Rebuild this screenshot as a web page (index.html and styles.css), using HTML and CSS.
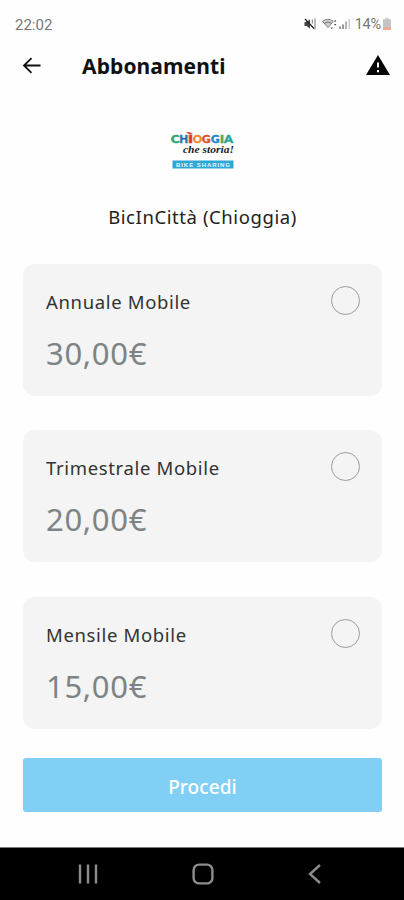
FILE: index.html
```
<!DOCTYPE html>
<html lang="it">
	<head>
		<meta charset="utf-8">
		<title>Abbonamenti</title>
		<link rel="stylesheet" href="styles.css">
	</head>
	<body>
		<div class="statusbar">
			<span class="clock">22:02</span>
			<div class="status-icons">
				<svg width="12" height="12" viewBox="0 0 12 12">
					<path d="M0.5 4h2.2L6 1.2v9.6L2.7 8H0.5z" fill="#444"/>
					<path d="M1 1l9 9.5" stroke="#222" stroke-width="1.3"/>
					<path d="M8.3 1.5v4M11 0.5v11" stroke="#777" stroke-width="1"/>
				</svg>
				<svg class="wifi" width="15" height="12" viewBox="0 0 15 12">
					<path d="M0.6 3.3Q6 -0.8 11.4 3.3L6 9.7z" fill="#ccc" stroke="#888" stroke-width="1"/>
					<path d="M2.5 5.3Q6 2.8 9.5 5.3" fill="none" stroke="#777"/>
					<path d="M8.5 9.5l1.2 1.5 1.3-1.5zM12 3.5l1.2-1.7 1.2 1.7zM12 6l1.2 1.7L14.4 6z" fill="#444"/>
				</svg>
				<svg width="12" height="12" viewBox="0 0 12 12">
					<path d="M1 8.5V11M4 6.5V11" stroke="#777" stroke-width="1.5"/>
					<path d="M7 3.5V11" stroke="#999" stroke-width="1.5"/>
					<path d="M10.3 1V11" stroke="#ccc" stroke-width="1.5"/>
				</svg>
				<span class="percent">14%</span>
				<svg width="8" height="12" viewBox="0 0 8 12">
					<path d="M2.5 0h3v1.2H8V12H0V1.2h2.5z" fill="#c4c4c4"/>
					<path d="M0 9.5h8V12H0z" fill="#f5a58f"/>
				</svg>
			</div>
		</div>
		<header>
			<svg width="20" height="18" viewBox="0 0 20 18">
				<path d="M9.5 1.2L2 8.500l7.500 7.300M2 8.500H18.500" fill="none" stroke="#111" stroke-width="1.8"/>
			</svg>
			<h1>Abbonamenti</h1>
			<svg class="warning" width="24" height="20" viewBox="0 0 24 20">
				<path d="M12 0L24 20H0z" fill="#050505"/>
				<path d="M11 7.5h2v5h-2zM11 15h2v2.2h-2z" fill="#fff"/>
			</svg>
		</header>
		<main>
			<svg class="logo" width="66" height="42" viewBox="0 0 66 42">
				<g class="logo-name">
					<text x="1" y="12.5" textLength="8.5" lengthAdjust="spacingAndGlyphs" fill="#2ba56a" stroke="#2ba56a">C</text>
					<text x="9.5" y="12.5" textLength="8.5" lengthAdjust="spacingAndGlyphs" fill="#2f6db0" stroke="#2f6db0">H</text>
					<text x="18" y="12.5" textLength="5" lengthAdjust="spacingAndGlyphs" fill="#e3342c" stroke="#e3342c">Ì</text>
					<text x="23" y="12.5" textLength="9" lengthAdjust="spacingAndGlyphs" fill="#ee8a26" stroke="#ee8a26">O</text>
					<text x="32" y="12.5" textLength="8.5" lengthAdjust="spacingAndGlyphs" fill="#e04f2e" stroke="#e04f2e">G</text>
					<text x="41" y="12.5" textLength="8.5" lengthAdjust="spacingAndGlyphs" fill="#168bc5" stroke="#168bc5">G</text>
					<text x="50" y="12.5" textLength="4" lengthAdjust="spacingAndGlyphs" fill="#5f9f48" stroke="#5f9f48">I</text>
					<text x="54" y="12.5" textLength="9" lengthAdjust="spacingAndGlyphs" fill="#25a69a" stroke="#25a69a">A</text>
				</g>
				<text class="logo-script" x="13" y="23" textLength="51" lengthAdjust="spacingAndGlyphs">che storia!</text>
				<path d="M2.5 30.5h61v8h-61z" fill="#2fa6d4"/>
				<text class="logo-strip" x="6" y="37" textLength="54">BIKE SHARING</text>
			</svg>
			<h2>BicInCittà (Chioggia)</h2>
			<div class="plan">
				<div class="plan-info">
					<span class="plan-name">Annuale Mobile</span>
					<span class="price">30,00€</span>
				</div>
				<span class="radio"></span>
			</div>
			<div class="plan">
				<div class="plan-info">
					<span class="plan-name">Trimestrale Mobile</span>
					<span class="price">20,00€</span>
				</div>
				<span class="radio"></span>
			</div>
			<div class="plan">
				<div class="plan-info">
					<span class="plan-name">Mensile Mobile</span>
					<span class="price">15,00€</span>
				</div>
				<span class="radio"></span>
			</div>
			<button type="button">Procedi</button>
		</main>
		<nav>
			<svg width="20" height="20" viewBox="0 0 20 20">
				<path d="M2 0.5v19M10 0.5v19M18 0.5v19" stroke="#8c8c8c" stroke-width="2.4"/>
			</svg>
			<svg width="22" height="22" viewBox="0 0 22 22">
				<rect x="1.6" y="1.6" width="18.8" height="18.8" rx="5.5" fill="none" stroke="#8c8c8c" stroke-width="2.4"/>
			</svg>
			<svg width="14" height="20" viewBox="0 0 14 20">
				<path d="M12 1L2 10l10 9" fill="none" stroke="#8c8c8c" stroke-width="2.4"/>
			</svg>
		</nav>
	</body>
</html>
```

FILE: styles.css
```
* {box-sizing: border-box;}
body {
	margin: 0;
	height: 900px;
	display: flex;
	flex-direction: column;
	background: #fefefe;
	color: #333;
	font-family: "Noto Sans", sans-serif;
}
svg {display: block; flex: none;}
.statusbar {
	height: 48px;
	padding: 0 13px 0 15px;
	display: flex;
	justify-content: space-between;
	align-items: center;
	font-family: Roboto, sans-serif;
	font-size: 15px;
	color: #777;
}
.clock {padding-top: 1px;}
.status-icons {display: flex; align-items: center;}
.wifi {margin: 0 2px 0 6px;}
.percent {
	margin: 0 2px 0 4px;
	font-size: 14.5px;
	letter-spacing: -0.2px;
}
header {
	height: 36px;
	padding: 0 14px 0 22px;
	display: flex;
	align-items: center;
}
h1 {
	flex: 1;
	margin: 0 0 0 40px;
	font-size: 21px;
	line-height: 36px;
	font-weight: 700;
	letter-spacing: 0.1px;
	color: #111;
}
.warning {margin-bottom: 2px;}
main {
	flex: 1;
	padding: 46px 22px 0 23px;
	display: flex;
	flex-direction: column;
}
.logo {align-self: center;}
.logo-name {font: 900 10.5px Lato, sans-serif; stroke-width: 0.5px;}
.logo-script {font: italic 700 11px "Liberation Serif", serif; fill: #222;}
.logo-strip {font: 700 6px "Liberation Sans", sans-serif; fill: #e8f8ff;}
h2 {
	margin: 30px 0 33px;
	text-align: center;
	font-size: 18.5px;
	line-height: 29px;
	font-weight: 400;
	letter-spacing: 0.58px;
	color: #222;
}
.plan {
	height: 132px;
	margin-bottom: 34.3px;
	padding: 22px 22px 0 23px;
	display: flex;
	justify-content: space-between;
	align-items: flex-start;
	background: #f4f4f4;
	border-radius: 12px;
}
.plan-info {display: flex; flex-direction: column;}
.plan-name {
	padding-top: 1px;
	font-size: 18.5px;
	line-height: 30px;
	letter-spacing: 0.65px;
}
.price {
	margin-top: 14px;
	font-size: 31px;
	line-height: 44px;
	letter-spacing: 0.7px;
	color: #7d8486;
}
.radio {
	width: 29px;
	height: 29px;
	border: 1px solid #999d9d;
	border-radius: 50%;
}
button {
	height: 54px;
	margin-top: -4.5px;
	padding: 3px 6px 0;
	border: 0;
	border-radius: 3px;
	background: #82cff5;
	color: #fff;
	font: 500 19px "Noto Sans", sans-serif;
	letter-spacing: 0.1px;
}
nav {
	height: 53px;
	padding: 0 82px 0 78px;
	display: flex;
	justify-content: space-between;
	align-items: center;
	background: #000;
	border-top: 1px solid #777;
}
```
